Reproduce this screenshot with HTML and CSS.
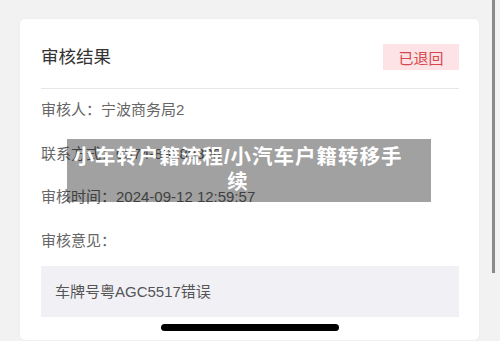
FILE: index.html
```html
<!DOCTYPE html>
<html lang="zh-CN">
<head>
  <meta charset="UTF-8">
  <title>审核结果</title>
  <link rel="stylesheet" href="styles.css">
</head>
<body>
  <div class="card">
    <!-- En-tête : titre et statut -->
    <div class="card-header">
      <h2 class="card-title">审核结果</h2>
      <span class="badge-rejected">已退回</span>
    </div>

    <div class="info-list">
      <div class="info-row">审核人：宁波商务局2</div>
      <div class="info-row">联系方式：0574-89189388</div>
      <div class="info-row">审核时间：2024-09-12 12:59:57</div>
      <div class="info-row">审核意见：</div>
    </div>

    <div class="opinion-box">车牌号粤AGC5517错误</div>
  </div>

  <!-- Bandeau de titre par-dessus la carte -->
  <div class="caption">
    <p>小车转户籍流程/小汽车户籍转移手续</p>
  </div>

  <div class="scroll-thumb"></div>
  <div class="home-bar"></div>
</body>
</html>
```

FILE: styles.css
```css
/* Styles généraux */
body {
  margin: 0;
  background-color: #f2f2f2;
  font-family: "Liberation Sans", "Noto Sans CJK SC", sans-serif;
  height: 341px;
  overflow: hidden;
  position: relative;
}
.card {
  background-color: #fff;
  border-radius: 5px;
  margin: 19px 21px 0 20px;
  padding: 0 20px 23px 21px;
  box-shadow: 0 0 3px rgba(0,0,0,0.04);
}
/* En-tête */
.card-header {
  display: flex;
  align-items: center;
  justify-content: space-between;
  padding: 25px 0 18px;
  border-bottom: 1px solid #e6e6e6;
}
.card-title {
  margin: 0;
  font-size: 17.5px;
  font-weight: normal;
  color: #333;
  line-height: 26px;
}
.badge-rejected {
  display: flex;
  align-items: center;
  justify-content: center;
  width: 76px;
  height: 26px;
  background-color: #fde3e5;
  color: #d8474d;
  font-size: 15px;
}
/* Lignes d'information */
.info-list {
  padding-top: 10px;
}
.info-row {
  font-size: 15px;
  line-height: 22px;
  color: #666;
  margin-bottom: 21.5px;
}
.info-row:last-child {
  margin-bottom: 0;
}
.opinion-box {
  margin-top: 14px;
  background-color: #f0f0f5;
  padding: 14px 14px;
  font-size: 15px;
  line-height: 23px;
  color: #555;
}
/* Bandeau */
.caption {
  position: absolute;
  left: 67px;
  top: 139px;
  width: 364px;
  height: 63px;
  box-sizing: border-box;
  padding: 5px 26px 0 4px;
  background-color: rgba(0, 0, 0, 0.37);
}
.caption p {
  margin: 0;
  color: #fff;
  font-weight: bold;
  font-size: 20.5px;
  letter-spacing: 1px;
  line-height: 25px;
  text-align: center;
}
.scroll-thumb {
  position: absolute;
  left: 492px;
  top: 0;
  width: 3px;
  height: 273px;
  background-color: #8a8a8a;
}
.home-bar {
  position: absolute;
  left: 161px;
  top: 324px;
  width: 178px;
  height: 7px;
  border-radius: 4px;
  background-color: #000;
}
```
